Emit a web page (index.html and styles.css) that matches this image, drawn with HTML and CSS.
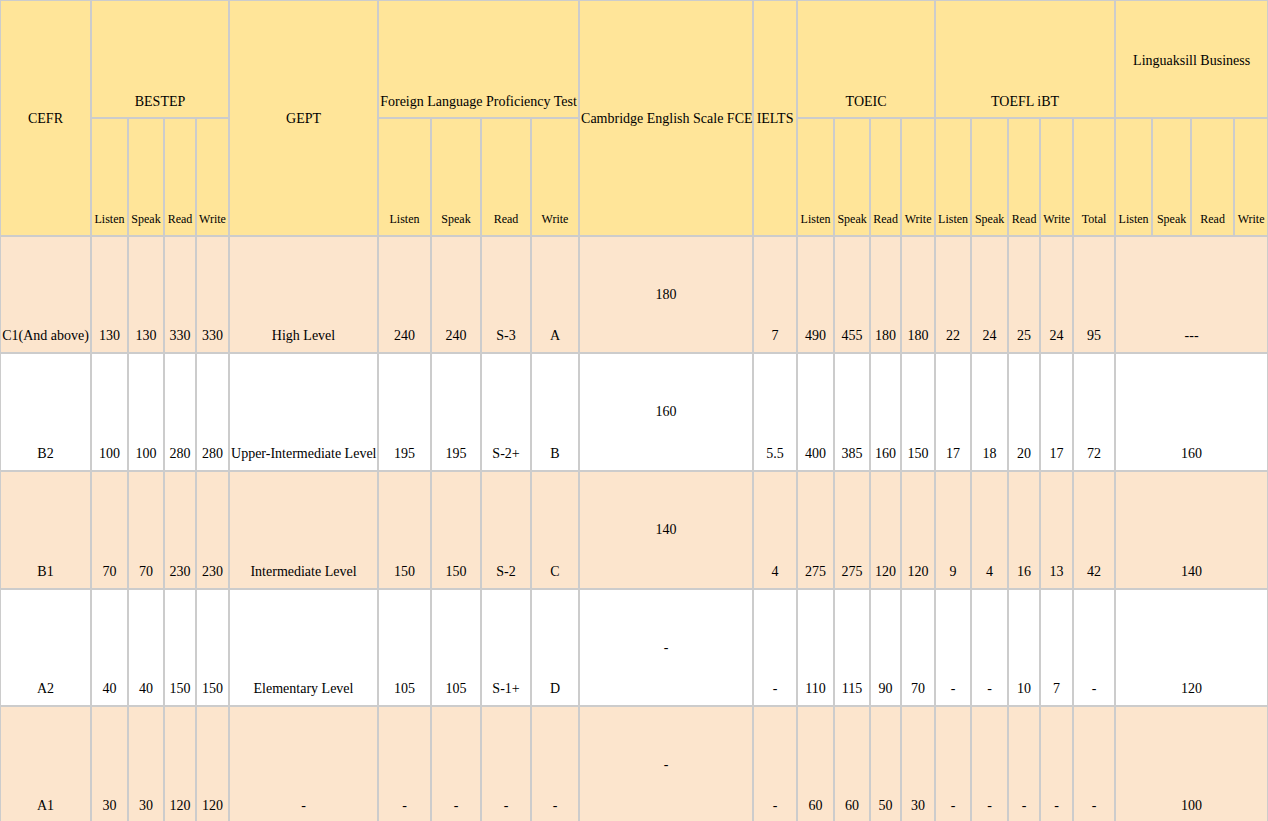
FILE: index.html
```html
<!DOCTYPE html>
<html>
<head>
<meta charset="utf-8">
<title>CEFR Comparison</title>
<link rel="stylesheet" href="styles.css">
</head>
<body>
<table class="grid">
  <colgroup>
    <col class="w91"><col class="w37"><col class="w36"><col class="w32"><col class="w33">
    <col class="w149"><col class="w53"><col class="w50"><col class="w50"><col class="w48">
    <col class="w174"><col class="w44">
    <col class="w37"><col class="w36"><col class="w31"><col class="w34">
    <col class="w36"><col class="w37"><col class="w32"><col class="w33"><col class="w42">
    <col class="w37"><col class="w39"><col class="w43"><col class="w34">
  </colgroup>
  <thead>
    <tr class="head top">
      <th rowspan="2" class="mid span2">CEFR</th>
      <th colspan="4">BESTEP</th>
      <th rowspan="2" class="mid span2">GEPT</th>
      <th colspan="4">Foreign Language Proficiency Test</th>
      <th rowspan="2" class="mid span2">Cambridge English Scale FCE</th>
      <th rowspan="2" class="mid span2">IELTS</th>
      <th colspan="4">TOEIC</th>
      <th colspan="5">TOEFL iBT</th>
      <th colspan="4" class="mid single">Linguaksill Business</th>
    </tr>
    <tr class="head sub">
      <th>Listen</th><th>Speak</th><th>Read</th><th>Write</th>
      <th>Listen</th><th>Speak</th><th>Read</th><th>Write</th>
      <th>Listen</th><th>Speak</th><th>Read</th><th>Write</th>
      <th>Listen</th><th>Speak</th><th>Read</th><th>Write</th><th>Total</th>
      <th>Listen</th><th>Speak</th><th>Read</th><th>Write</th>
    </tr>
  </thead>
  <tbody>
    <tr class="peach r117">
      <td>C1(And above)</td><td>130</td><td>130</td><td>330</td><td>330</td>
      <td>High Level</td><td>240</td><td>240</td><td>S-3</td><td>A</td>
      <td class="mid">180</td><td>7</td>
      <td>490</td><td>455</td><td>180</td><td>180</td>
      <td>22</td><td>24</td><td>25</td><td>24</td><td>95</td>
      <td colspan="4">---</td>
    </tr>
    <tr class="white r118">
      <td>B2</td><td>100</td><td>100</td><td>280</td><td>280</td>
      <td>Upper-Intermediate Level</td><td>195</td><td>195</td><td>S-2+</td><td>B</td>
      <td class="mid">160</td><td>5.5</td>
      <td>400</td><td>385</td><td>160</td><td>150</td>
      <td>17</td><td>18</td><td>20</td><td>17</td><td>72</td>
      <td colspan="4">160</td>
    </tr>
    <tr class="peach r118">
      <td>B1</td><td>70</td><td>70</td><td>230</td><td>230</td>
      <td>Intermediate Level</td><td>150</td><td>150</td><td>S-2</td><td>C</td>
      <td class="mid">140</td><td>4</td>
      <td>275</td><td>275</td><td>120</td><td>120</td>
      <td>9</td><td>4</td><td>16</td><td>13</td><td>42</td>
      <td colspan="4">140</td>
    </tr>
    <tr class="white r117">
      <td>A2</td><td>40</td><td>40</td><td>150</td><td>150</td>
      <td>Elementary Level</td><td>105</td><td>105</td><td>S-1+</td><td>D</td>
      <td class="mid">-</td><td>-</td>
      <td>110</td><td>115</td><td>90</td><td>70</td>
      <td>-</td><td>-</td><td>10</td><td>7</td><td>-</td>
      <td colspan="4">120</td>
    </tr>
    <tr class="peach r117">
      <td>A1</td><td>30</td><td>30</td><td>120</td><td>120</td>
      <td>-</td><td>-</td><td>-</td><td>-</td><td>-</td>
      <td class="mid">-</td><td>-</td>
      <td>60</td><td>60</td><td>50</td><td>30</td>
      <td>-</td><td>-</td><td>-</td><td>-</td><td>-</td>
      <td colspan="4">100</td>
    </tr>
  </tbody>
</table>
</body>
</html>
```
FILE: styles.css
```css
html, body {
  margin: 0;
  padding: 0;
  background: #ffffff;
}

body {
  font-family: "Liberation Serif", "Times New Roman", "Tinos", serif;
  font-size: 14px;
  color: #000000;
}

.grid {
  table-layout: fixed;
  width: 1268px;
  border-collapse: separate;
  border-spacing: 0;
  font-family: "Liberation Serif", "Times New Roman", serif;
}

.grid th,
.grid td {
  border: 1px solid #cccccc;
  padding: 0 1px 7px 1px;
  font-family: "Liberation Serif", "Times New Roman", serif;
  font-weight: normal;
  text-align: center;
  vertical-align: bottom;
  line-height: 18px;
  white-space: nowrap;
  overflow: visible;
}

.grid .mid {
  vertical-align: middle;
  padding-bottom: 0;
}

.grid .span2 {
  padding-top: 2px;
}

.grid .single {
  padding-top: 4px;
}

.head th {
  background: #ffe599;
}

.head {
  height: 118px;
}

.top th {
  padding-bottom: 6px;
}

.sub th {
  font-size: 12px;
}

.peach td {
  background: #fce5cd;
}

.white td {
  background: #ffffff;
}

.r117 {
  height: 117px;
}

.r118 {
  height: 118px;
}

.w31 { width: 31px; }
.w32 { width: 32px; }
.w33 { width: 33px; }
.w34 { width: 34px; }
.w36 { width: 36px; }
.w37 { width: 37px; }
.w39 { width: 39px; }
.w42 { width: 42px; }
.w43 { width: 43px; }
.w44 { width: 44px; }
.w48 { width: 48px; }
.w50 { width: 50px; }
.w53 { width: 53px; }
.w91 { width: 91px; }
.w149 { width: 149px; }
.w174 { width: 174px; }
```
